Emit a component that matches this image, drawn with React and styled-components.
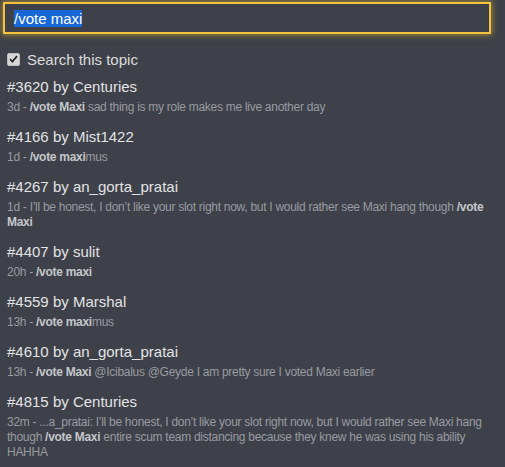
import React from "react";
import styled, { createGlobalStyle } from "styled-components";

const GlobalStyle = createGlobalStyle`
  html, body {
    margin: 0;
    padding: 0;
    background: #3e4149;
  }
  body {
    font-family: "Liberation Sans", Arial, sans-serif;
  }
`;

const Panel = styled.div`
  width: 505px;
  height: 467px;
  box-sizing: border-box;
  padding: 2px 14px 0 3px;
  overflow: hidden;
`;

const SearchBox = styled.div`
  height: 32px;
  box-sizing: border-box;
  border: 2px solid #f4c33c;
  box-shadow: 0 0 6px 1px rgba(240, 190, 50, 0.55);
  background: #3e4149;
  padding: 0 9px;
  display: flex;
  align-items: center;
`;

const Selected = styled.span`
  background: #1767d6;
  color: #ffffff;
  font-size: 15px;
  line-height: 17px;
`;

const OptionRow = styled.label`
  display: flex;
  align-items: center;
  gap: 7px;
  margin-top: 16px;
  padding-left: 4px;
  height: 18px;
  font-size: 15px;
  color: #dcdcdc;
`;

const CheckBox = styled.span`
  width: 13px;
  height: 13px;
  box-sizing: border-box;
  border-radius: 2px;
  background: #d6d6d6;
  border: 1px solid #bdbdbd;
  display: flex;
  align-items: center;
  justify-content: center;
`;

const List = styled.div`
  margin-top: 10px;
  padding-left: 4px;
  display: flex;
  flex-direction: column;
`;

const Row = styled.div`
  margin-bottom: 13px;
`;

const Title = styled.div`
  font-size: 15px;
  line-height: 18px;
  color: #e2e3e5;
`;

const Blurb = styled.div`
  margin-top: 4px;
  font-size: 12px;
  letter-spacing: -0.28px;
  line-height: 15px;
  color: #989ba2;
`;

const Hit = styled.strong`
  color: #c4c6cb;
  font-weight: bold;
`;

const results = [
  { id: "3620", user: "Centuries", age: "3d", parts: [["/vote Maxi", true], [" sad thing is my role makes me live another day", false]] },
  { id: "4166", user: "Mist1422", age: "1d", parts: [["/vote maxi", true], ["mus", false]] },
  {
    id: "4267",
    user: "an_gorta_pratai",
    age: "1d",
    parts: [["I’ll be honest, I don’t like your slot right now, but I would rather see Maxi hang though ", false], ["/vote Maxi", true]],
  },
  { id: "4407", user: "sulit", age: "20h", parts: [["/vote maxi", true]] },
  { id: "4559", user: "Marshal", age: "13h", parts: [["/vote maxi", true], ["mus", false]] },
  {
    id: "4610",
    user: "an_gorta_pratai",
    age: "13h",
    parts: [["/vote Maxi", true], [" @Icibalus @Geyde I am pretty sure I voted Maxi earlier", false]],
  },
  {
    id: "4815",
    user: "Centuries",
    age: "32m",
    parts: [
      ["...a_pratai: I’ll be honest, I don’t like your slot right now, but I would rather see Maxi hang though ", false],
      ["/vote Maxi", true],
      [" entire scum team distancing because they knew he was using his ability HAHHA", false],
    ],
  },
];

export default function App() {
  return (
    <>
      <GlobalStyle />
      <Panel>
        <SearchBox>
          <Selected>/vote maxi</Selected>
        </SearchBox>
        <OptionRow>
          <CheckBox>
            <svg width="9" height="8" viewBox="0 0 9 8">
              <path d="M1 4.2 L3.4 6.6 L8 1.2" fill="none" stroke="#2b2b2b" strokeWidth="1.8" />
            </svg>
          </CheckBox>
          Search this topic
        </OptionRow>
        <List>
          {results.map((r) => (
            <Row key={r.id}>
              <Title>
                #{r.id} by {r.user}
              </Title>
              <Blurb>
                {r.age} -{" "}
                {r.parts.map(([t, hit], i) => (hit ? <Hit key={i}>{t}</Hit> : <span key={i}>{t}</span>))}
              </Blurb>
            </Row>
          ))}
        </List>
      </Panel>
    </>
  );
}
